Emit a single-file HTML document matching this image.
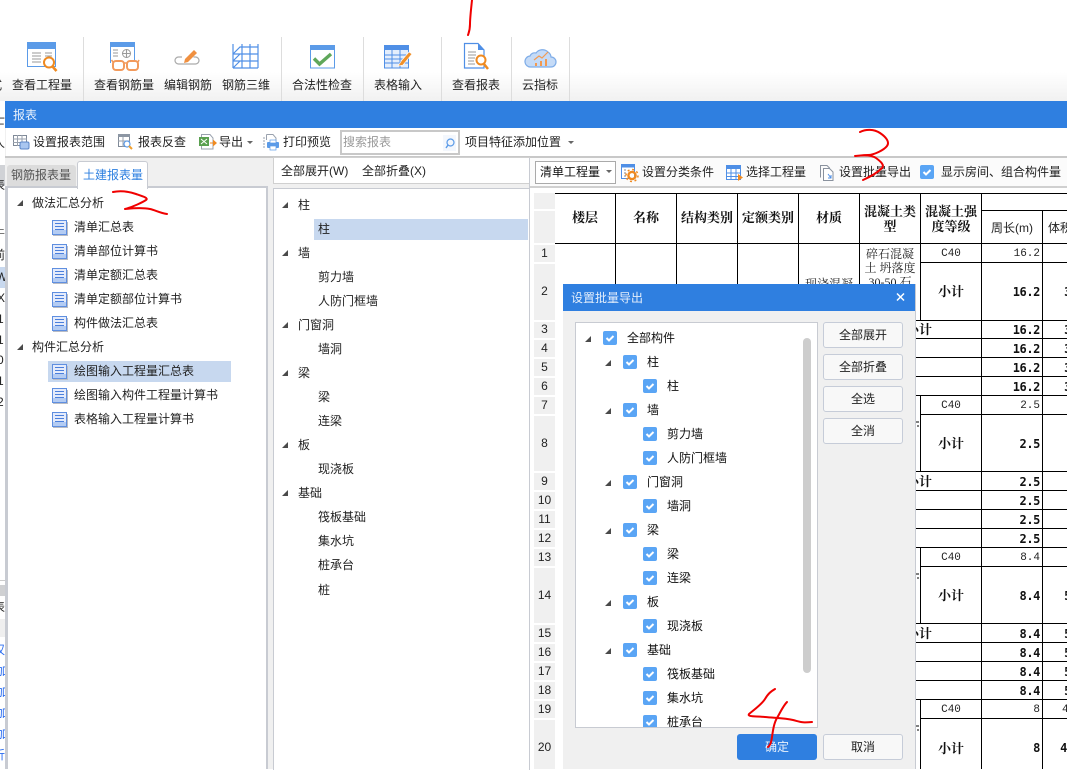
<!DOCTYPE html>
<html><head><meta charset="utf-8"><style>
html,body{margin:0;padding:0}
body{width:1067px;height:769px;position:relative;overflow:hidden;background:#fff;font:12px/16px "Liberation Sans","Noto Sans CJK SC",sans-serif;color:#222}
.b{position:absolute}
.t{position:absolute;white-space:nowrap;font:12px/16px "Liberation Sans","Noto Sans CJK SC",sans-serif;color:#222}
.c{text-align:center}
.h{position:absolute;font:bold 13px/14px "Liberation Serif","Noto Serif CJK SC",serif;color:#111;text-align:center}
.x{position:absolute;font:bold 13px/16px "Liberation Serif","Noto Serif CJK SC",serif;color:#111;white-space:nowrap}
.n{position:absolute;left:981px;width:59px;text-align:right;font:11px/14px "Liberation Mono",monospace;color:#222}
.m{position:absolute;left:981px;width:59px;text-align:right;font:bold 12px/14px "DejaVu Sans Mono",monospace;color:#111;letter-spacing:-.4px}
.r{position:absolute;left:534px;width:21px;text-align:center;font:12px/14px "Liberation Sans",sans-serif;color:#222}
.g{position:absolute;left:534px;width:21px;background:#f0f0f0}
.btn{position:absolute;left:823px;width:78px;height:24px;border:1px solid #c6ccd8;border-radius:3px;background:#f8f8f8;text-align:center;font:12px/24px "Liberation Sans","Noto Sans CJK SC",sans-serif;color:#222}
</style></head><body>

<!-- top toolbar -->
<div class="b" style="left:0;top:37px;width:1067px;height:64px;background:linear-gradient(#fff 0%,#fff 55%,#f1f1f1 100%)"></div>
<div class="b" style="left:83px;top:37px;width:1px;height:64px;background:#ddd"></div>
<div class="b" style="left:281px;top:37px;width:1px;height:64px;background:#ddd"></div>
<div class="b" style="left:363px;top:37px;width:1px;height:64px;background:#ddd"></div>
<div class="b" style="left:441px;top:37px;width:1px;height:64px;background:#ddd"></div>
<div class="b" style="left:511px;top:37px;width:1px;height:64px;background:#ddd"></div>
<div class="b" style="left:569px;top:37px;width:1px;height:64px;background:#ddd"></div>
<div class="t" style="left:-10px;top:77px;width:12px;overflow:hidden">式</div>
<div class="t c" style="left:2px;top:77px;width:80px">查看工程量</div>
<div class="t c" style="left:84px;top:77px;width:80px">查看钢筋量</div>
<div class="t c" style="left:158px;top:77px;width:60px">编辑钢筋</div>
<div class="t c" style="left:216px;top:77px;width:60px">钢筋三维</div>
<div class="t c" style="left:282px;top:77px;width:80px">合法性检查</div>
<div class="t c" style="left:368px;top:77px;width:60px">表格输入</div>
<div class="t c" style="left:446px;top:77px;width:60px">查看报表</div>
<div class="t c" style="left:510px;top:77px;width:60px">云指标</div>

<!-- background app sliver -->
<div class="b" style="left:0;top:101px;width:5px;height:668px;overflow:hidden;background:#fff">
<div class="b" style="left:0;top:64px;width:5px;height:21px;background:#d0d2d6"></div>
<div class="b" style="left:0;top:166px;width:5px;height:21px;background:#c8d8ee"></div>
<div class="b" style="left:0;top:479px;width:5px;height:1px;background:#ccc"></div>
<div class="b" style="left:0;top:484px;width:5px;height:11px;background:#cfd0d2"></div>
<div class="b" style="left:0;top:518px;width:5px;height:18px;background:#efefef"></div>
<div class="t" style="left:-7px;top:11px">士</div>
<div class="t" style="left:-7px;top:34px">人</div>
<div class="t" style="left:-7px;top:76px">表</div>
<div class="t" style="left:-7px;top:124px;color:#666">牛</div>
<div class="t" style="left:-7px;top:146px">前</div>
<div class="t" style="left:-4px;top:168px">W</div>
<div class="t" style="left:-3px;top:189px">X</div>
<div class="t" style="left:-3px;top:210px">1</div>
<div class="t" style="left:-3px;top:231px">1</div>
<div class="t" style="left:-3px;top:251px">0</div>
<div class="t" style="left:-3px;top:272px">1</div>
<div class="t" style="left:-3px;top:293px">2</div>
<div class="t" style="left:-7px;top:498px">表</div>
<div class="t" style="left:-7px;top:541px;color:#2a6cf0">汉</div>
<div class="t" style="left:-4px;top:562px;color:#2a6cf0">加</div>
<div class="t" style="left:-4px;top:583px;color:#2a6cf0">加</div>
<div class="t" style="left:-4px;top:604px;color:#2a6cf0">加</div>
<div class="t" style="left:-4px;top:625px;color:#2a6cf0">加</div>
<div class="t" style="left:-7px;top:646px;color:#2a6cf0">折</div>
</div>

<!-- report window -->
<div class="b" style="left:5px;top:101px;width:1062px;height:668px;background:#f0f0f0"></div>
<div class="b" style="left:5px;top:101px;width:1062px;height:27px;background:#2f7fe0"></div>
<div class="t" style="left:13px;top:107px;color:#e8f1fc">报表</div>
<div class="b" style="left:6px;top:128px;width:1061px;height:28px;background:#fff"></div>
<div class="b" style="left:5px;top:156px;width:1062px;height:2px;background:#c8c8c8"></div>
<div class="b" style="left:340px;top:130px;width:116px;height:21px;border:2px solid #c8c8c8;background:#fff"></div>
<div class="t" style="left:33px;top:134px">设置报表范围</div>
<div class="t" style="left:138px;top:134px">报表反查</div>
<div class="t" style="left:219px;top:134px">导出</div>
<div class="t" style="left:283px;top:134px">打印预览</div>
<div class="t" style="left:343px;top:134px;color:#999">搜索报表</div>
<div class="t" style="left:465px;top:134px">项目特征添加位置</div>

<!-- left panel -->
<div class="b" style="left:7px;top:165px;width:69px;height:22px;background:#dcdcdc;border-radius:3px 3px 0 0"></div>
<div class="t" style="left:11px;top:167px;color:#555">钢筋报表量</div>
<div class="b" style="left:5px;top:186px;width:263px;height:583px;background:#c8cbd2"></div>
<div class="b" style="left:8px;top:188px;width:258px;height:581px;background:#fff"></div>
<div class="b" style="left:77px;top:161px;width:69px;height:27px;background:#fff;border:1px solid #c8cbd2;border-bottom:0;border-radius:3px 3px 0 0"></div>
<div class="t" style="left:83px;top:167px;color:#2c7fe0">土建报表量</div>
<div class="b" style="left:48px;top:361px;width:183px;height:21px;background:#c7d8ef"></div>
<div class="t" style="left:32px;top:195px">做法汇总分析</div>
<div class="t" style="left:74px;top:219px">清单汇总表</div>
<div class="t" style="left:74px;top:243px">清单部位计算书</div>
<div class="t" style="left:74px;top:267px">清单定额汇总表</div>
<div class="t" style="left:74px;top:291px">清单定额部位计算书</div>
<div class="t" style="left:74px;top:315px">构件做法汇总表</div>
<div class="t" style="left:32px;top:339px">构件汇总分析</div>
<div class="t" style="left:74px;top:363px">绘图输入工程量汇总表</div>
<div class="t" style="left:74px;top:387px">绘图输入构件工程量计算书</div>
<div class="t" style="left:74px;top:411px">表格输入工程量计算书</div>

<!-- middle panel -->
<div class="b" style="left:273px;top:157px;width:255px;height:25px;background:#fff;border:1px solid #d0d0d0"></div>
<div class="t" style="left:281px;top:163px">全部展开(W)</div>
<div class="t" style="left:362px;top:163px">全部折叠(X)</div>
<div class="b" style="left:273px;top:188px;width:255px;height:581px;background:#fff;border:1px solid #c8cbd2;border-bottom:0"></div>
<div class="b" style="left:314px;top:219px;width:214px;height:21px;background:#c7d8ef"></div>
<div class="t" style="left:298px;top:197px">柱</div>
<div class="t" style="left:318px;top:221px">柱</div>
<div class="t" style="left:298px;top:245px">墙</div>
<div class="t" style="left:318px;top:269px">剪力墙</div>
<div class="t" style="left:318px;top:293px">人防门框墙</div>
<div class="t" style="left:298px;top:317px">门窗洞</div>
<div class="t" style="left:318px;top:341px">墙洞</div>
<div class="t" style="left:298px;top:365px">梁</div>
<div class="t" style="left:318px;top:389px">梁</div>
<div class="t" style="left:318px;top:413px">连梁</div>
<div class="t" style="left:298px;top:437px">板</div>
<div class="t" style="left:318px;top:461px">现浇板</div>
<div class="t" style="left:298px;top:485px">基础</div>
<div class="t" style="left:318px;top:509px">筏板基础</div>
<div class="t" style="left:318px;top:533px">集水坑</div>
<div class="t" style="left:318px;top:557px">桩承台</div>
<div class="t" style="left:318px;top:582px">桩</div>

<!-- right panel toolbar and table -->
<div class="b" style="left:530px;top:158px;width:537px;height:28px;background:#fbfbfb"></div>
<div class="b" style="left:530px;top:186px;width:537px;height:2px;background:#d0d0d0"></div>
<div class="b" style="left:530px;top:188px;width:537px;height:581px;background:#fff"></div>
<div class="b" style="left:529px;top:158px;width:1px;height:611px;background:#c8cbd2"></div>
<div class="b" style="left:535px;top:161px;width:79px;height:21px;background:#fff;border:1px solid #aaa"></div>
<div class="t" style="left:540px;top:164px;color:#111">清单工程量</div>
<div class="t" style="left:642px;top:164px">设置分类条件</div>
<div class="t" style="left:746px;top:164px">选择工程量</div>
<div class="t" style="left:839px;top:164px">设置批量导出</div>
<div class="t" style="left:941px;top:164px">显示房间、组合构件量</div>

<div class="g" style="top:193px;height:16px"></div>
<div class="g" style="top:211px;height:32px"></div>
<div class="g" style="top:245px;height:17px"></div>
<div class="g" style="top:264px;height:56px"></div>
<div class="g" style="top:322px;height:16px"></div>
<div class="g" style="top:340px;height:17px"></div>
<div class="g" style="top:359px;height:17px"></div>
<div class="g" style="top:378px;height:17px"></div>
<div class="g" style="top:397px;height:17px"></div>
<div class="g" style="top:416px;height:55px"></div>
<div class="g" style="top:473px;height:17px"></div>
<div class="g" style="top:492px;height:17px"></div>
<div class="g" style="top:511px;height:17px"></div>
<div class="g" style="top:530px;height:17px"></div>
<div class="g" style="top:549px;height:17px"></div>
<div class="g" style="top:568px;height:55px"></div>
<div class="g" style="top:625px;height:17px"></div>
<div class="g" style="top:644px;height:17px"></div>
<div class="g" style="top:663px;height:17px"></div>
<div class="g" style="top:682px;height:17px"></div>
<div class="g" style="top:701px;height:17px"></div>
<div class="g" style="top:720px;height:49px"></div>
<div class="r" style="top:246px">1</div><div class="r" style="top:284px">2</div><div class="r" style="top:322px">3</div><div class="r" style="top:341px">4</div><div class="r" style="top:360px">5</div><div class="r" style="top:379px">6</div><div class="r" style="top:398px">7</div><div class="r" style="top:436px">8</div><div class="r" style="top:474px">9</div><div class="r" style="top:493px">10</div><div class="r" style="top:512px">11</div><div class="r" style="top:531px">12</div><div class="r" style="top:550px">13</div><div class="r" style="top:588px">14</div><div class="r" style="top:626px">15</div><div class="r" style="top:645px">16</div><div class="r" style="top:664px">17</div><div class="r" style="top:683px">18</div><div class="r" style="top:702px">19</div><div class="r" style="top:740px">20</div>

<div class="h" style="left:555px;top:211px;width:60px">楼层</div>
<div class="h" style="left:616px;top:211px;width:60px">名称</div>
<div class="h" style="left:677px;top:211px;width:60px">结构类别</div>
<div class="h" style="left:738px;top:211px;width:60px">定额类别</div>
<div class="h" style="left:799px;top:211px;width:60px">材质</div>
<div class="h" style="left:860px;top:204px;width:60px;line-height:15px">混凝土类型</div>
<div class="h" style="left:921px;top:204px;width:60px;line-height:15px">混凝土强度等级</div>
<div class="t c" style="left:982px;top:220px;width:60px;font-size:12px">周长(m)</div>
<div class="t" style="left:1048px;top:220px">体积</div>
<div class="t c" style="left:861px;top:247px;width:58px;line-height:14px;white-space:normal;font-family:'Liberation Serif','Noto Serif CJK SC',serif">碎石混凝土 坍落度30-50 石</div>
<div class="t c" style="left:800px;top:276px;width:58px;font-family:'Liberation Serif','Noto Serif CJK SC',serif">现浇混凝</div>

<div class="t c" style="left:921px;top:246px;width:60px;font-size:11px;font-family:'Liberation Mono',monospace">C40</div>
<div class="t c" style="left:921px;top:398px;width:60px;font-size:11px;font-family:'Liberation Mono',monospace">C40</div>
<div class="t c" style="left:921px;top:550px;width:60px;font-size:11px;font-family:'Liberation Mono',monospace">C40</div>
<div class="t c" style="left:921px;top:702px;width:60px;font-size:11px;font-family:'Liberation Mono',monospace">C40</div>
<div class="x c" style="left:921px;top:284px;width:60px">小计</div>
<div class="x c" style="left:921px;top:436px;width:60px">小计</div>
<div class="x c" style="left:921px;top:588px;width:60px">小计</div>
<div class="x c" style="left:921px;top:741px;width:60px">小计</div>
<div class="x" style="left:906px;top:322px">小计</div>
<div class="x" style="left:906px;top:474px">小计</div>
<div class="x" style="left:906px;top:626px">小计</div>

<div class="n" style="top:247px">16.2</div><div class="m" style="top:285px">16.2</div><div class="m" style="top:323px">16.2</div><div class="m" style="top:342px">16.2</div><div class="m" style="top:361px">16.2</div><div class="m" style="top:380px">16.2</div>
<div class="n" style="top:399px">2.5</div><div class="m" style="top:437px">2.5</div><div class="m" style="top:475px">2.5</div><div class="m" style="top:494px">2.5</div><div class="m" style="top:513px">2.5</div><div class="m" style="top:532px">2.5</div>
<div class="n" style="top:551px">8.4</div><div class="m" style="top:589px">8.4</div><div class="m" style="top:627px">8.4</div><div class="m" style="top:646px">8.4</div><div class="m" style="top:665px">8.4</div><div class="m" style="top:684px">8.4</div>
<div class="n" style="top:703px">8</div><div class="m" style="top:741px">8</div>
<div class="m" style="left:1063px;width:8px;top:285px">3</div><div class="m" style="left:1063px;width:8px;top:323px">3</div><div class="m" style="left:1063px;width:8px;top:342px">3</div><div class="m" style="left:1063px;width:8px;top:361px">3</div><div class="m" style="left:1063px;width:8px;top:380px">3</div>
<div class="m" style="left:1063px;width:8px;top:589px">5</div><div class="m" style="left:1063px;width:8px;top:627px">5</div><div class="m" style="left:1063px;width:8px;top:646px">5</div><div class="m" style="left:1063px;width:8px;top:665px">5</div><div class="m" style="left:1063px;width:8px;top:684px">5</div>
<div class="n" style="left:1062px;width:8px;top:703px;text-align:left">4</div><div class="m" style="left:1059px;width:8px;top:741px">4</div>

<!-- lines and icons -->
<svg class="b" style="left:0;top:0" width="1067" height="769" viewBox="0 0 1067 769" fill="none">
<defs>
<g id="doc"><rect x=".5" y=".5" width="14" height="14" fill="#e4ebfb" stroke="#5f8fe0"/><rect x="1" y="10" width="13" height="4" fill="#b4ccf3"/><path d="M3 3.5h9M3 6.5h9M3 9.5h9" stroke="#4a7fdc"/><path d="M1 15.5h15M15.5 2v14" stroke="#b9bcc4"/></g>
<path id="tri" d="M6 0V6H0Z" fill="#4a4a4a"/>
</defs>
<g stroke="#000" stroke-width="1" shape-rendering="crispEdges">
<path d="M555 193.5H1067M555 243.5H1067M981 210.5H1067"/>
<path d="M615.5 193V290M676.5 193V290M737.5 193V290M798.5 193V290M859.5 193V290M920.5 193V320M920.5 395V471M920.5 547V623M920.5 699V769M981.5 193V769M1042.5 210V769"/>
<path d="M920 262.5H1067M860 320.5H1067M860 338.5H1067M860 357.5H1067M860 376.5H1067M860 395.5H1067M920 414.5H1067M860 471.5H1067M860 490.5H1067M860 509.5H1067M860 528.5H1067M860 547.5H1067M920 566.5H1067M860 623.5H1067M860 642.5H1067M860 661.5H1067M860 680.5H1067M860 699.5H1067M920 718.5H1067"/>
<path d="M916 422h3M917 426h2M916 574h3M917 578h2M916 726h3M917 730h2"/>
</g>

<!-- toolbar icon: view quantities -->
<g transform="translate(27,42)"><rect x=".5" y=".5" width="28" height="24" fill="#fff" stroke="#5b9be8"/><rect width="29" height="7" fill="#5b9be8"/><path d="M5 11h9M5 14h9M5 17h9M5 20h9M18 11h7M18 14h7" stroke="#9a9a9a" stroke-width="1.100"/><circle cx="22" cy="20.500" r="5" fill="#fff" stroke="#ef8a21" stroke-width="2"/><path d="M25.500 24.500l4 4.500" stroke="#ef8a21" stroke-width="2.600"/></g>
<!-- rebar quantity glasses -->
<g transform="translate(110,42)"><path d="M.5 21V.5H24.500V18" stroke="#5b9be8" fill="#fff"/><rect width="25" height="5" fill="#5b9be8"/><path d="M3 8h5M3 11h5M3 14h5M12 11.500h9M16.500 7v9" stroke="#9a9a9a" stroke-width="1.100"/><circle cx="16.500" cy="11.500" r="4" stroke="#9a9a9a"/><rect x="3" y="19" width="11" height="9" rx="3" fill="#fff" stroke="#f29a5c" stroke-width="2"/><rect x="17" y="19" width="11" height="9" rx="3" fill="#fff" stroke="#f29a5c" stroke-width="2"/><path d="M14 21h3M3 20L1.500 18M28 20l1-2" stroke="#f29a5c" stroke-width="1.500"/></g>
<!-- edit rebar -->
<g transform="translate(175,49)"><path d="M7 8H3.500a3.500 3.500 0 0 0 0 7h17a3.500 3.500 0 0 0 0-7h-2" stroke="#aaa" stroke-width="1.200"/><path d="M10 10L19 1l3 3-9 9-4 1z" fill="#f09040"/></g>
<!-- rebar 3d -->
<g transform="translate(232,44)" stroke="#4f8fe6" stroke-width="1.200"><path d="M1 0V24M10 0V24M18 0V24M26 0V24M1 10L8 3H26M1 10H26M1 17H26M1 24H26M1 17L8 10M1 24L8 17"/></g>
<!-- legality check -->
<g transform="translate(310,45)"><rect x=".5" y=".5" width="24" height="22.500" fill="#fff" stroke="#5b9be8"/><rect width="25" height="5" fill="#5b9be8"/><path d="M4 13.500l5.500 5.500L21 9" stroke="#5fa75a" stroke-width="3.400"/></g>
<!-- table input -->
<g transform="translate(384,45)"><rect x=".5" y=".5" width="24" height="22.500" fill="#e4eefc" stroke="#4f8fe6"/><rect width="25" height="5" fill="#4f8fe6"/><path d="M0 10H25M0 14H25M0 18H25M8 5V23M16 5V23" stroke="#4f8fe6"/><path d="M18 15L25 7l3 2-9 11-5 1z" fill="#f0902a" stroke="#fff" stroke-width=".6"/></g>
<!-- view report -->
<g transform="translate(464,43)"><path d="M.5.5H14L20 7V25H.5Z" fill="#fff" stroke="#4f8fe6" stroke-width="1.200"/><path d="M14 .5V7H20Z" fill="#4f8fe6"/><path d="M4 9h8M4 12h8M4 15h7M4 18h6M4 21h7" stroke="#9a9a9a"/><circle cx="17" cy="17" r="4.500" fill="#fff" stroke="#ef8a21" stroke-width="2"/><path d="M20 21l4 5" stroke="#ef8a21" stroke-width="2.500"/></g>
<!-- cloud -->
<g transform="translate(525,47)"><path d="M6 20a5.500 5.500 0 0 1-1-11 5 5 0 0 1 6-3 8 8 0 0 1 12-1 6.500 6.500 0 0 1 3 5 5 5 0 0 1 0 10Z" fill="#c5dbf7" stroke="#7fade8" stroke-width="1.200"/><path d="M9 13l5-4 3 2 6-6" stroke="#f39a50" stroke-width="1.200"/><path d="M11 19v-3M16 19v-5M21 19v-7" stroke="#f39a50" stroke-width="2"/></g>

<!-- row 2 icons -->
<g transform="translate(13,135)"><rect x=".5" y=".5" width="13" height="10" stroke="#808a98"/><path d="M0 4H14M0 7.500H14M4.500 0V11M9 0V11" stroke="#9aa2ae"/><rect x="7" y="7" width="9" height="7" rx="1.500" fill="#a9c6f0" stroke="#5b86c8"/></g>
<g transform="translate(118,134)"><rect x=".5" y=".5" width="11" height="12" stroke="#808a98"/><rect x="0" y="0" width="12" height="3" fill="#8c96a3"/><path d="M0 7H12M5 3V13" stroke="#9aa2ae"/><circle cx="9" cy="10" r="3" fill="#fff" stroke="#5b9be8" stroke-width="1.200"/><path d="M11 12l3 3" stroke="#f0a030" stroke-width="2"/></g>
<g transform="translate(199,134)"><path d="M2.500.5H11L14 4V15H2.500Z" fill="#fff" stroke="#9aa2ae"/><rect y="3" width="10" height="9" fill="#5aa050"/><path d="M2 5l6 5M8 5l-6 5" stroke="#fff"/><path d="M11 8.500h3V5.500l4 3.500-4 3.500v-3h-3Z" fill="#f08a20"/></g>
<g transform="translate(263,134)"><path d="M3.500.5H10L13 4V8M3.500.5V6" stroke="#9aa2ae"/><path d="M0 4h2M0 7h2M0 10h2M0 13h2" stroke="#9aa2ae"/><rect x="4" y="8" width="12" height="6" rx="1" fill="#5b9be8"/><rect x="7" y="6" width="6" height="3" fill="#fff" stroke="#5b9be8" stroke-width=".7"/><rect x="7" y="12" width="6" height="4" fill="#fff" stroke="#5b9be8" stroke-width=".7"/></g>
<rect x="443" y="135" width="13" height="16" fill="#f3f7fd"/>
<g transform="translate(445,138)"><circle cx="5.500" cy="4.500" r="3.500" stroke="#5b9be8" stroke-width="1.200"/><path d="M3 7L1 10" stroke="#5b9be8" stroke-width="1.400"/></g>
<path d="M247 141h6l-3 3zM568 141h6l-3 3zM606 170h6l-3 3z" fill="#666"/>

<!-- right toolbar icons -->
<g transform="translate(621,164)"><rect x=".5" y=".5" width="13" height="14" fill="#fff" stroke="#4f8fe6"/><rect width="14" height="3.500" fill="#4f8fe6"/><path d="M3 6h2M3 9h2M3 12h2" stroke="#888"/><circle cx="11" cy="11.500" r="3.600" stroke="#f08a20" stroke-width="2.400"/><circle cx="11" cy="11.500" r="6" stroke="#f08a20" stroke-dasharray="2 2.700" stroke-width="1.500"/></g>
<g transform="translate(726,165)"><rect x=".5" y=".5" width="14" height="14" fill="#fff" stroke="#4f8fe6"/><rect width="15" height="4" fill="#4f8fe6"/><path d="M0 8H15M0 11.500H15M5 4V15M10 4V15" stroke="#4f8fe6"/><path d="M12 9l5 3.500-5 3.500z" fill="#f08a20"/></g>
<g transform="translate(820,165)" stroke="#8a929e"><path d="M.5 12.500V.5H7L9.500 3V4"/><path d="M3.500 15.500V3.500H9.500L13 7V15.500Z" fill="#fff"/><path d="M8 9l3 4M11 10v3H8" stroke="#4f8fe6"/></g>
<rect x="920" y="165" width="14" height="14" rx="2" fill="#5aa5f5"/><path d="M923.500 172l2.500 2.500 4.500-4.500" stroke="#fff" stroke-width="2"/>

<!-- left tree -->
<use href="#tri" x="17" y="200"/><use href="#tri" x="17" y="344"/>
<use href="#doc" x="52" y="220"/><use href="#doc" x="52" y="244"/><use href="#doc" x="52" y="268"/><use href="#doc" x="52" y="292"/><use href="#doc" x="52" y="316"/><use href="#doc" x="52" y="364"/><use href="#doc" x="52" y="388"/><use href="#doc" x="52" y="412"/>
<!-- middle tree -->
<use href="#tri" x="282" y="202"/><use href="#tri" x="282" y="250"/><use href="#tri" x="282" y="322"/><use href="#tri" x="282" y="370"/><use href="#tri" x="282" y="442"/><use href="#tri" x="282" y="490"/>
</svg>

<!-- dialog -->
<div class="b" style="left:563px;top:284px;width:352px;height:485px;background:#f0f0f0;border-right:1px solid #c8cbd2"></div>
<div class="b" style="left:563px;top:284px;width:352px;height:27px;background:#2f7fe0"></div>
<div class="t" style="left:571px;top:290px;color:#e4eefb">设置批量导出</div>
<div class="b" style="left:575px;top:322px;width:241px;height:404px;background:#fff;border:1px solid #c8cbd2;overflow:hidden">
<div class="b" style="left:227px;top:15px;width:8px;height:335px;background:#cdcdcd;border-radius:4px"></div>
</div>
<div class="btn" style="top:322px">全部展开</div>
<div class="btn" style="top:354px">全部折叠</div>
<div class="btn" style="top:386px">全选</div>
<div class="btn" style="top:418px">全消</div>
<div class="b" style="left:737px;top:734px;width:80px;height:26px;background:#2f7fe0;border-radius:3px;text-align:center;font:12px/26px 'Liberation Sans','Noto Sans CJK SC',sans-serif;color:#e8f1fc">确定</div>
<div class="btn" style="top:734px">取消</div>

<div class="t" style="left:627px;top:330px;color:#111">全部构件</div>
<div class="t" style="left:647px;top:354px;color:#111">柱</div>
<div class="t" style="left:667px;top:378px;color:#111">柱</div>
<div class="t" style="left:647px;top:402px;color:#111">墙</div>
<div class="t" style="left:667px;top:426px;color:#111">剪力墙</div>
<div class="t" style="left:667px;top:450px;color:#111">人防门框墙</div>
<div class="t" style="left:647px;top:474px;color:#111">门窗洞</div>
<div class="t" style="left:667px;top:498px;color:#111">墙洞</div>
<div class="t" style="left:647px;top:522px;color:#111">梁</div>
<div class="t" style="left:667px;top:546px;color:#111">梁</div>
<div class="t" style="left:667px;top:570px;color:#111">连梁</div>
<div class="t" style="left:647px;top:594px;color:#111">板</div>
<div class="t" style="left:667px;top:618px;color:#111">现浇板</div>
<div class="t" style="left:647px;top:642px;color:#111">基础</div>
<div class="t" style="left:667px;top:666px;color:#111">筏板基础</div>
<div class="t" style="left:667px;top:690px;color:#111">集水坑</div>
<div class="b" style="left:667px;top:714px;width:80px;height:13px;overflow:hidden"><div class="t" style="left:0;top:0;color:#111">桩承台</div></div>

<svg class="b" style="left:0;top:0" width="1067" height="769" viewBox="0 0 1067 769" fill="none">
<defs><g id="cb"><rect width="14" height="14" rx="2" fill="#5aa5f5"/><path d="M3.500 7l2.500 2.500 4.500-4.500" stroke="#fff" stroke-width="2"/></g></defs>
<path d="M591 336v6h-6zM611 360v6h-6zM611 408v6h-6zM611 480v6h-6zM611 528v6h-6zM611 600v6h-6zM611 648v6h-6z" fill="#4a4a4a"/>
<use href="#cb" x="603" y="331"/><use href="#cb" x="623" y="355"/><use href="#cb" x="643" y="379"/><use href="#cb" x="623" y="403"/><use href="#cb" x="643" y="427"/><use href="#cb" x="643" y="451"/><use href="#cb" x="623" y="475"/><use href="#cb" x="643" y="499"/><use href="#cb" x="623" y="523"/><use href="#cb" x="643" y="547"/><use href="#cb" x="643" y="571"/><use href="#cb" x="623" y="595"/><use href="#cb" x="643" y="619"/><use href="#cb" x="623" y="643"/><use href="#cb" x="643" y="667"/><use href="#cb" x="643" y="691"/>
<path d="M643 717a2 2 0 0 1 2-2h10a2 2 0 0 1 2 2v10h-14z" fill="#5aa5f5"/><path d="M646.500 722l2.500 2.500 4.500-4.500" stroke="#fff" stroke-width="2"/>
<path d="M897 293.500l7 7M904 293.500l-7 7" stroke="#fff" stroke-width="1.500"/>
<!-- red annotations -->
<g stroke="#f00000" stroke-width="2" stroke-linecap="round" stroke-linejoin="round">
<path d="M472 0C471 10 470 18 470 24S469 32 468 35"/>
<path d="M113 192C122 190 130 192 136 194S149 198 146 200 133 207 125 209C135 208 145 208 150 209S160 213 167 214"/>
<path d="M860 132C866 129 874 129 880 133S890 142 887 146 874 155 868 155 858 156 855 156C864 155 872 155 876 158S885 165 882 168 872 176 863 180"/>
<path d="M775 689C770 692 768 694 765 699S755 709 749 714C747 717 755 716 765 717S785 718 793 720 802 723 812 722"/>
<path d="M787 702C783 706 780 713 777 718S773 730 772 737 770 745 768 747"/>
</g>
</svg>
</body></html>
